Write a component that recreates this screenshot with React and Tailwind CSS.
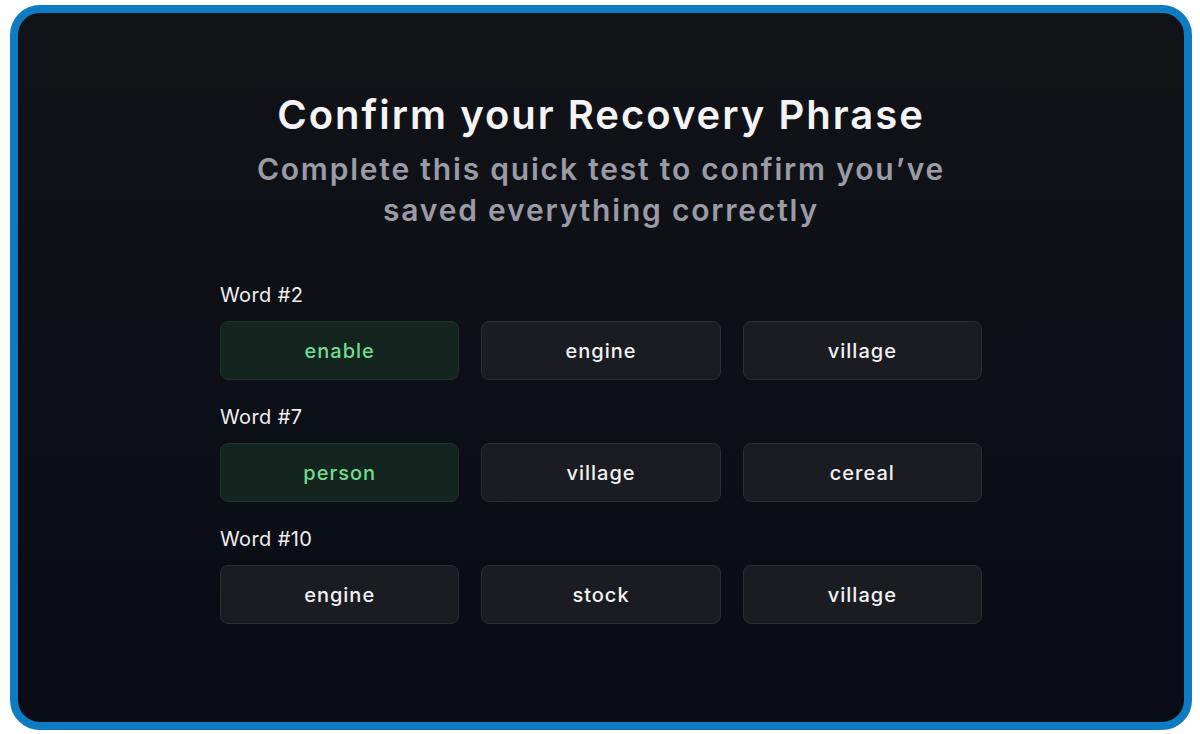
import React from 'react';

const rows = [
  { label: 'Word #2', words: ['enable', 'engine', 'village'], picked: 0 },
  { label: 'Word #7', words: ['person', 'village', 'cereal'], picked: 0 },
  { label: 'Word #10', words: ['engine', 'stock', 'village'], picked: -1 },
];

const App = () => {
  return (
    <div className="w-[1200px] h-[734px] bg-white pt-[5px] pl-[10px]" style={{ fontFamily: 'Inter, "Open Sans", sans-serif' }}>
      <div className="w-[1182px] h-[725px] rounded-[30px] border-[8px] border-[#0d7cc3] overflow-hidden bg-gradient-to-b from-[#121317] to-[#0a0c16] flex flex-col items-center pt-[78px]">
        <h1 className="text-[40px] leading-[48px] font-semibold text-[#f4f4f6] tracking-[2px]">Confirm your Recovery Phrase</h1>
        <p className="mt-[10px] text-[30px] leading-[41px] font-semibold text-[#9a9ba7] text-center tracking-[1.8px]">
          Complete this quick test to confirm you’ve
          <br />
          saved everything correctly
        </p>

        <div className="mt-[52px] w-[762px] flex flex-col gap-[25px]">
          {rows.map((row) => (
            <div key={row.label} className="flex flex-col gap-[14px]">
              <span className="text-[20px] leading-[24px] text-[#eeeef1] tracking-[0.4px]">{row.label}</span>
              <div className="grid grid-cols-3 gap-[22px]">
                {row.words.map((w, i) => (
                  <button
                    key={w + i}
                    className={`h-[59px] rounded-[8px] border text-[20px] font-medium tracking-[1px] ${
                      i === row.picked
                        ? 'bg-[#14241f] border-[#1d3528] text-[#72dc93]'
                        : 'bg-[#1b1c22] border-[#2b2d34] text-[#f2f2f4]'
                    }`}
                  >
                    {w}
                  </button>
                ))}
              </div>
            </div>
          ))}
        </div>
      </div>
    </div>
  );
};

export default App;
